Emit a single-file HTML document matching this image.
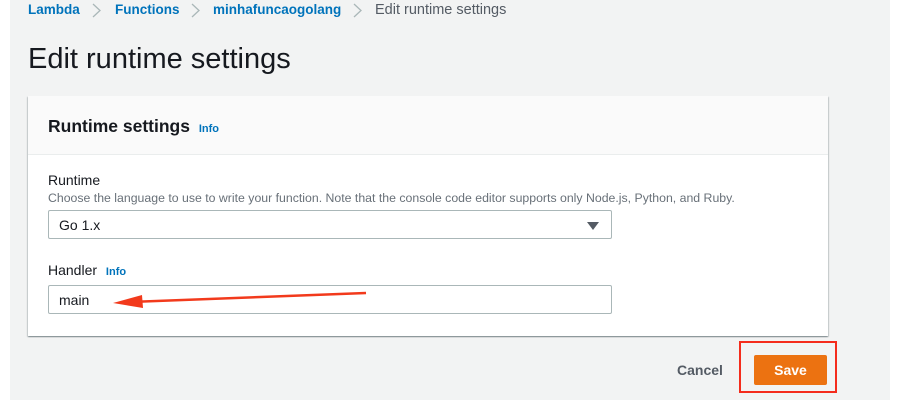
<!DOCTYPE html>
<html><head><meta charset="utf-8"><style>
*{box-sizing:border-box;margin:0;padding:0}
body{width:900px;height:400px;overflow:hidden;background:#fff;font-family:"Liberation Sans",sans-serif;position:relative}
.bg{position:absolute;left:10px;top:0;width:880px;height:400px;background:#f2f3f3}
.abs{position:absolute;white-space:nowrap}
.bc{top:2px;font-size:13.5px;color:#0073bb;font-weight:bold}
.panel{position:absolute;left:28px;top:96px;width:800px;height:240px;background:#fff;box-shadow:0 1px 1px rgba(0,28,36,.3),1px 1px 1px rgba(0,28,36,.15),-1px 1px 1px rgba(0,28,36,.15)}
.ph{position:absolute;left:0;top:0;width:800px;height:59px;background:#fafafa;border-bottom:1px solid #eaeded}
.info{color:#0073bb;font-size:11px;font-weight:bold}
.field{position:absolute;left:48px;width:564px;height:29px;border:1px solid #aab7b8;border-radius:2px;background:#fff;font-size:14px;color:#16191f;padding:6px 10px}
</style></head><body>
<div class="bg"></div>
<div class="abs bc" style="left:28px">Lambda</div>
<div class="abs bc" style="left:115px">Functions</div>
<div class="abs bc" style="left:213px">minhafuncaogolang</div>
<div class="abs bc" style="left:375px;font-size:14.5px;font-weight:normal;color:#545b64">Edit runtime settings</div>
<svg class="abs" style="left:0;top:0" width="400" height="20"><g fill="none" stroke="#aab7b8" stroke-width="1.3"><path d="M93 4l7 6.5-7 6.5"/><path d="M192 4l7 6.5-7 6.5"/><path d="M354 4l7 6.5-7 6.5"/></g></svg>
<div class="abs" style="left:28px;top:43px;font-size:29px;color:#16191f">Edit runtime settings</div>
<div class="panel"><div class="ph"></div>
<div class="abs" style="left:20px;top:20px;font-size:17.5px;font-weight:bold;color:#16191f">Runtime settings <span class="info" style="margin-left:4px">Info</span></div>
</div>
<div class="abs" style="left:48px;top:172px;font-size:14px;color:#16191f">Runtime</div>
<div class="abs" style="left:48px;top:191px;font-size:12.3px;color:#687078">Choose the language to use to write your function. Note that the console code editor supports only Node.js, Python, and Ruby.</div>
<div class="field" style="top:210px">Go 1.x<span style="position:absolute;right:12px;top:11px;width:0;height:0;border-left:6px solid transparent;border-right:6px solid transparent;border-top:8px solid #545b64"></span></div>
<div class="abs" style="left:48px;top:262px;font-size:14px;color:#16191f">Handler <span class="info" style="margin-left:5px">Info</span></div>
<div class="field" style="top:285px">main</div>
<svg class="abs" style="left:0;top:0" width="900" height="400"><line x1="366" y1="293" x2="130" y2="302" stroke="#f23a1c" stroke-width="2.5"/><polygon points="113,303 142,295 143,308" fill="#f23a1c"/></svg>
<div class="abs" style="left:677px;top:362px;font-size:14px;font-weight:bold;color:#545b64">Cancel</div>
<div class="abs" style="left:739px;top:341px;width:98px;height:52px;border:2px solid #f42c1c"></div>
<div class="abs" style="left:754px;top:355px;width:73px;height:30px;background:#ec7211;border-radius:2px;color:#fff;font-weight:bold;font-size:14px;text-align:center;line-height:30px">Save</div>
</body></html>
